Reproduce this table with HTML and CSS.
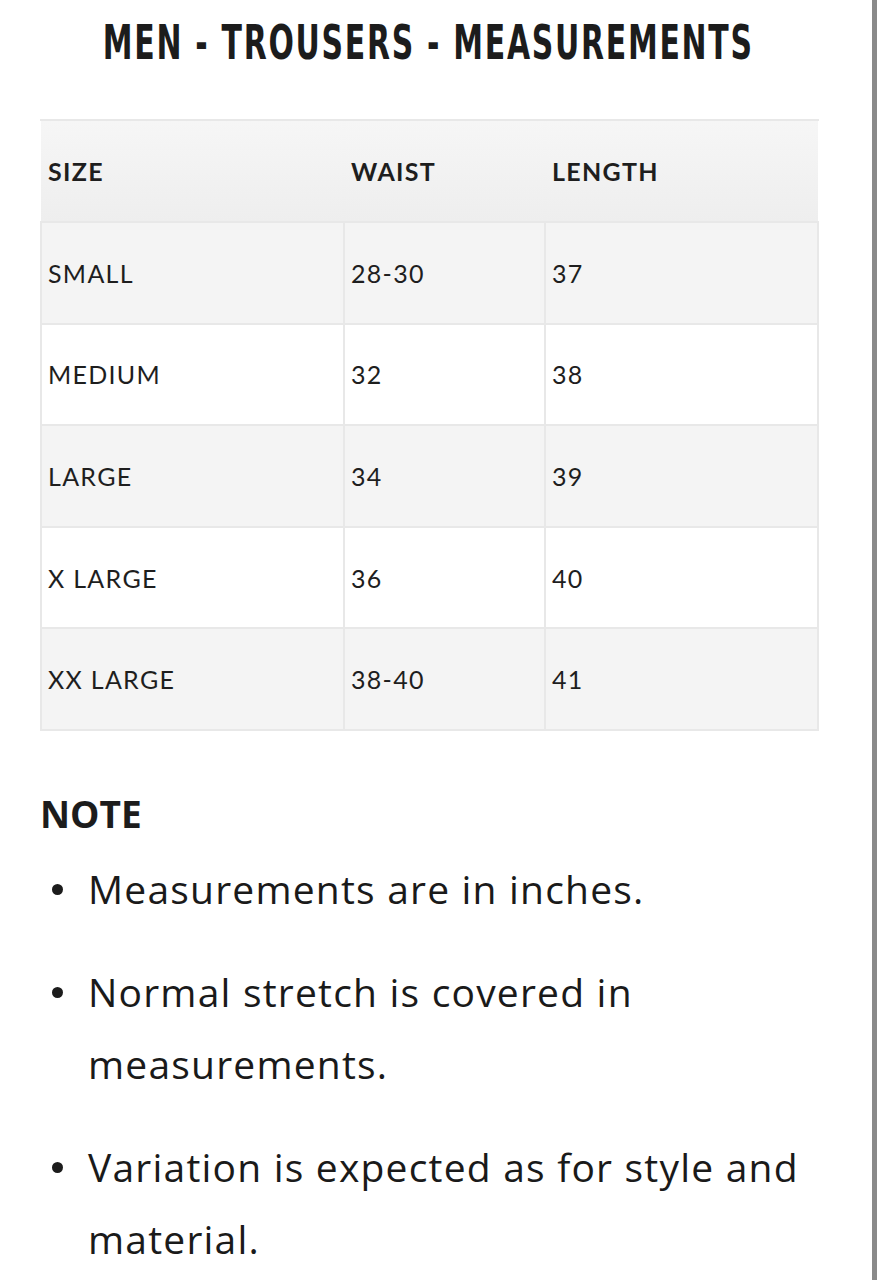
FILE: index.html
```html
<!DOCTYPE html>
<html>
<head>
<meta charset="utf-8">
<link rel="stylesheet" href="styles.css">
</head>
<body>
<div class="page">
  <main class="content">
    <h1 class="title"><span class="title-text">MEN - TROUSERS - MEASUREMENTS</span></h1>
    <table class="chart">
      <colgroup><col class="c1"><col class="c2"><col class="c3"></colgroup>
      <thead>
        <tr><th>SIZE</th><th>WAIST</th><th>LENGTH</th></tr>
      </thead>
      <tbody>
        <tr class="odd"><td>SMALL</td><td>28-30</td><td>37</td></tr>
        <tr><td>MEDIUM</td><td>32</td><td>38</td></tr>
        <tr class="odd"><td>LARGE</td><td>34</td><td>39</td></tr>
        <tr><td>X LARGE</td><td>36</td><td>40</td></tr>
        <tr class="odd"><td>XX LARGE</td><td>38-40</td><td>41</td></tr>
      </tbody>
    </table>
    <h2 class="note">NOTE</h2>
    <ul class="notes">
      <li>Measurements are in inches.</li>
      <li>Normal stretch is covered in measurements.</li>
      <li>Variation is expected as for style and material.</li>
    </ul>
  </main>
  <div class="edge"></div>
</div>
</body>
</html>
```
FILE: styles.css
```css
html, body { margin: 0; padding: 0; background: #fff; }
body { font-family: Lato, "Open Sans", sans-serif; color: #1a1a1a; }
.page { display: flex; min-height: 1280px; }
.content { width: 777px; padding: 0 55px 0 40px; }
.edge { width: 5px; background: #8a8a8a; }
.title {
  margin: 0; padding-top: 14px; height: 119px; box-sizing: border-box;
  display: flex; justify-content: center; white-space: nowrap;
  font-family: "DejaVu Sans", sans-serif; font-stretch: condensed;
  font-weight: 700; font-size: 48px; letter-spacing: 2.5px; color: #1c1c1c;
}
.title-text { display: inline-block; flex: none; transform: scaleX(0.692); transform-origin: center; }
.chart { width: 777px; border-collapse: collapse; table-layout: fixed; }
.c1 { width: 303px; } .c2 { width: 201px; } .c3 { width: 273px; }
.chart th, .chart td {
  height: 101.6px; box-sizing: border-box; padding: 0 6px; text-align: left;
  font-size: 25px; letter-spacing: 1.3px; border: 2px solid #e8e8e8; color: #1e1e1e;
}
.chart th {
  height: 102px;
  font-weight: 700; background: linear-gradient(#f6f6f6, #eeeeee);
  border-left-color: transparent; border-right-color: transparent;
}
.chart td { font-weight: 400; background: #fff; }
.chart .odd td { background: #f4f4f4; }
.note { margin: 57px 0 0; font-family: "Open Sans", sans-serif; font-size: 37px; font-weight: 700; color: #1c1c1c; }
.notes { list-style: none; margin: 14px 0 0; padding: 0 0 0 48px; font-family: "Open Sans", sans-serif; font-size: 39px; letter-spacing: 1.2px; line-height: 72px; width: 777px; box-sizing: border-box; }
.notes li { position: relative; margin-bottom: 31px; }
.notes li::before {
  content: ""; position: absolute; left: -36px; top: 31px;
  width: 11px; height: 11px; border-radius: 50%; background: #1c1c1c;
}
```
